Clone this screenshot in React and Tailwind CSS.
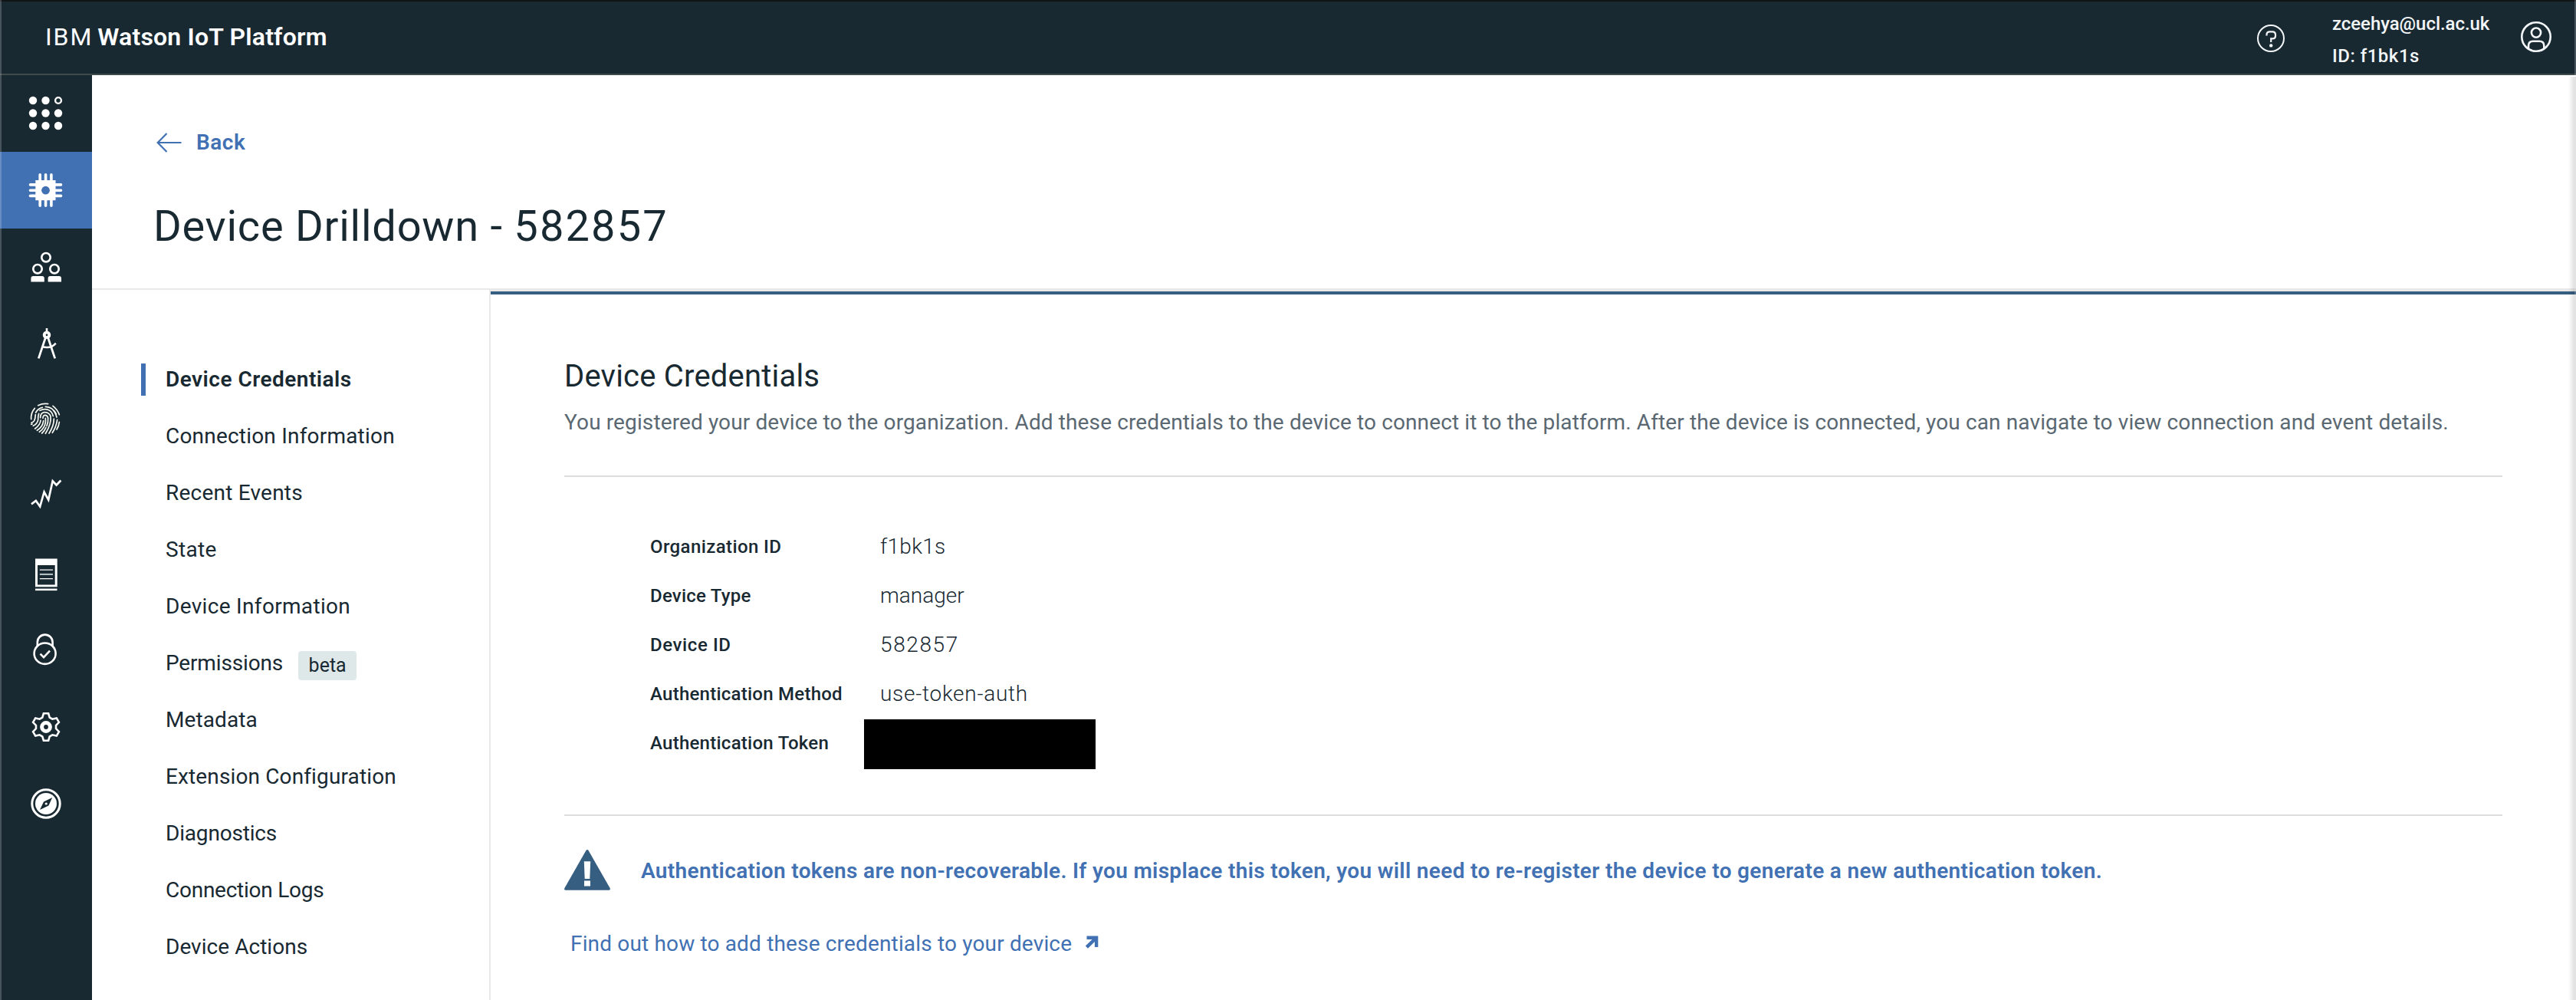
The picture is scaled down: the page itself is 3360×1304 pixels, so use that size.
const W = "#ffffff";
const INK = "#182932";

function gearPath(cx, cy) {
  const pts = [];
  for (let i = 0; i < 6; i++) {
    const base = -90 + i * 60;
    [[-21, 13.2], [-10, 18], [10, 18], [21, 13.2]].forEach(([d, r]) => {
      const a = ((base + d) * Math.PI) / 180;
      pts.push(`${(cx + r * Math.cos(a)).toFixed(2)} ${(cy + r * Math.sin(a)).toFixed(2)}`);
    });
  }
  return "M" + pts.join("L") + "Z";
}

const railIcons = [
  <g fill={W}>
    {[131, 147.5, 164].map((y) =>
      [43, 59.5, 76].map((x) =>
        y === 131 && x === 76 ? (
          <circle key={x + "-" + y} cx={x} cy={y} r="3.9" fill="none" stroke={W} strokeWidth="2.4" />
        ) : (
          <circle key={x + "-" + y} cx={x} cy={y} r="5.2" />
        )
      )
    )}
  </g>,
  <g>
    <path
      d="M52.2 227.7V268.3M59.6 227.7V268.3M66.9 227.7V268.3M39.5 240.9H79.5M39.5 248.2H79.5M39.5 255.4H79.5"
      stroke={W}
      strokeWidth="3.6"
      strokeLinecap="round"
    />
    <rect x="46.3" y="235" width="26.2" height="26.2" fill={W} />
    <circle cx="59.5" cy="248.2" r="5.4" fill="#4171b3" />
  </g>,
  <g>
    <g fill="none" stroke={W} strokeWidth="2.7">
      <circle cx="60" cy="335.7" r="5.7" />
      <circle cx="49" cy="350.7" r="5.7" />
      <circle cx="71" cy="350.7" r="5.7" />
    </g>
    <path d="M40.4 367.5V363Q40.4 360 43.4 360H54.8Q57.8 360 57.8 363V367.5ZM62.6 367.5V363Q62.6 360 65.6 360H77Q80 360 80 363V367.5Z" fill={W} />
  </g>,
  <g fill="none" stroke={W}>
    <path d="M61 428V433" strokeWidth="2.6" />
    <circle cx="61" cy="436.8" r="3.3" strokeWidth="3.9" />
    <path d="M59.3 440.5L50.3 467.4M62.7 440.5L71.7 467.4" strokeWidth="2.8" />
    <path d="M55 452Q66 455.5 72.8 447.6" strokeWidth="2.4" />
  </g>,
  <g transform="translate(30 510) scale(0.3333)" fill="none" stroke="#f4f6ef" strokeWidth="5.2" strokeLinecap="round">
    <path d="M59 56Q78 47 98 50M117 58Q135 72 142 92M142 121Q140 138 132 150M46 67Q30 85 32 110" />
    <path d="M50 84Q58 68 76 64M88 61Q103 62 112 68Q126 80 132 102M134 112Q130 140 115 163M49 92Q48 108 44 116Q41 121 33 124" />
    <path d="M66 76Q82 68 98 73Q114 80 118 98M121 108Q121 136 102 165M62 88Q58 100 59 112Q56 128 40 136M121 76Q126 82 130 90" />
    <path d="M68 104Q68 86 82 83Q102 82 108 98Q112 128 88 166M69 114Q68 132 47 147M74 165Q84 156 90 142" />
    <path d="M78 106Q78 94 87 94Q97 96 98 106Q99 122 93 136M80 116Q78 140 55 154M88 106Q90 126 82 140Q76 152 64 160M32 130L36 129" />
  </g>,
  <path d="M41 657.3L46.8 653L52.2 660.5L57.6 641.5L63.2 651.8L68.7 627.3L73.6 632.5L79.4 626.5" fill="none" stroke={W} strokeWidth="2.7" />,
  <g>
    <path d="M46 728.6H74.7V765.2H46ZM49 737V762.4H71.7V737Z" fill={W} fillRule="evenodd" />
    <path d="M51.8 743.2H69M51.8 754.6H69" stroke={W} strokeWidth="1.3" />
    <path d="M51.8 748.9H69" stroke="#bcc6c8" strokeWidth="2" />
    <rect x="46" y="767.6" width="28.5" height="2.5" fill={W} />
  </g>,
  <g fill="none" stroke={W} strokeWidth="2.6">
    <ellipse cx="58.6" cy="852.2" rx="14" ry="13.7" />
    <path d="M48.8 843V837.5A9.9 9.9 0 0 1 68.6 837.5V843" />
    <path d="M52.5 852.6L57 857.2L65 848.6" />
  </g>,
  <g fill="none" stroke={W}>
    <path d={gearPath(60, 948)} strokeWidth="2.6" />
    <circle cx="60" cy="948" r="5.4" strokeWidth="5" />
  </g>,
  <g>
    <circle cx="60" cy="1048" r="18.2" fill="none" stroke={W} strokeWidth="3" />
    <circle cx="60" cy="1048" r="14" fill={W} />
    <path d="M68.2 1040L63.4 1050.6L52 1056L57 1045.4Z" fill={INK} />
    <circle cx="60.2" cy="1048" r="1.6" fill={W} />
  </g>,
];

const navItems = [
  ["Device Credentials", "font-semibold tracking-[0.48px]"],
  ["Connection Information", "tracking-[0.2px]"],
  ["Recent Events", "tracking-[0.22px]"],
  ["State", "tracking-[0.3px]"],
  ["Device Information", "tracking-[0.32px]"],
  ["Permissions", "tracking-[-0.15px]"],
  ["Metadata", "tracking-[0.1px]"],
  ["Extension Configuration", "tracking-[0.13px]"],
  ["Diagnostics", "tracking-[-0.18px]"],
  ["Connection Logs", "tracking-[-0.25px]"],
  ["Device Actions", "tracking-[0.04px]"],
];

const credentials = [
  ["Organization ID", "tracking-[0.4px]", "f1bk1s", "tracking-[0.28px]"],
  ["Device Type", "tracking-[0.23px]", "manager", "tracking-[0px]"],
  ["Device ID", "tracking-[0.6px]", "582857", "tracking-[1.6px]"],
  ["Authentication Method", "tracking-[0.25px]", "use-token-auth", "tracking-[0.73px]"],
  ["Authentication Token", "tracking-[0.26px]", null, ""],
];

function Header() {
  return (
    <header className="flex h-[98px] items-start border-t-2 border-b-2 border-t-[#101414] border-b-[#3f4a4b] bg-[#182932] pl-[59px] text-white">
      <div className="mt-[26px] flex items-baseline text-[32px] leading-10">
        <span className="tracking-[1.9px]">IBM</span>
        <span className="ml-[6px] font-semibold tracking-[0.2px]">Watson IoT Platform</span>
      </div>
      <svg className="mt-[28px] ml-auto h-10 w-10" viewBox="2942 30 40 40" fill="none" stroke="#f3f6f8">
        <circle cx="2962" cy="50" r="17" strokeWidth="2" />
        <path d="M2956.5 46.5V45.5Q2956.5 41.3 2960.5 41.3H2964Q2968 41.3 2968 45.3V46.8Q2968 50.4 2964.5 50.4H2962.2V55" strokeWidth="2.2" />
        <circle cx="2962.2" cy="59.4" r="2.2" fill="#f3f6f8" stroke="none" />
      </svg>
      <div className="mt-[8px] ml-[60px] w-[246px] text-[24px] leading-[42px] font-medium text-[#f3f6f8]">
        <div className="tracking-[-0.05px]">zceehya@ucl.ac.uk</div>
        <div className="tracking-[0.5px]">ID: f1bk1s</div>
      </div>
      <svg className="mt-[26px] mr-[32px] h-10 w-10" viewBox="3288 28 40 40" fill="none" stroke="#f3f6f8" strokeWidth="2.6">
        <circle cx="3308" cy="48" r="18.7" />
        <circle cx="3308" cy="42.6" r="6.1" />
        <path d="M3298 63.5V59.5Q3298 53.7 3304 53.7H3312.3Q3318.3 53.7 3318.3 59.5V63.5" />
      </svg>
    </header>
  );
}

function Rail() {
  return (
    <aside className="w-[120px] shrink-0 bg-[#182932]">
      {railIcons.map((icon, i) => (
        <div key={i} className={"flex h-[100px] items-center justify-center " + (i === 1 ? "bg-[#4171b3]" : "")}>
          <svg className="h-[60px] w-[60px]" viewBox={`30 ${118 + i * 100} 60 60`}>
            {icon}
          </svg>
        </div>
      ))}
    </aside>
  );
}

function SideNav() {
  return (
    <nav className="w-[520px] shrink-0 border-r-2 border-[#e9e9e9] pt-[80px] pl-[64px]">
      {navItems.map(([label, style], i) => (
        <div key={label} className="flex h-[74px] items-center">
          <span className={"h-[42px] w-[6px] " + (i === 0 ? "bg-[#4171b3]" : "")} />
          <span className={"ml-[26px] text-[28px] leading-10 whitespace-nowrap " + style}>{label}</span>
          {label === "Permissions" && (
            <span className="mt-[5px] ml-[20px] flex h-[38px] w-[76px] items-center justify-center rounded bg-[#dfe8e9] text-[25px]">
              beta
            </span>
          )}
        </div>
      ))}
    </nav>
  );
}

function Credentials() {
  return (
    <section className="grow border-t-2 border-[#e9e9e9]">
      <div className="border-t-4 border-[#365e80] px-24 pt-[83px]">
        <h2 className="text-[40px] leading-[48px] tracking-[0.2px]">Device Credentials</h2>
        <p className="mt-4 text-[28px] leading-10 tracking-[0.12px] whitespace-nowrap text-[#5a6872]">
          You registered your device to the organization. Add these credentials to the device to connect it to the
          platform. After the device is connected, you can navigate to view connection and event details.
        </p>
        <dl className="mt-[49px] border-y-2 border-[#dcdddd] pt-[59px] pb-[61px] pl-[112px]">
          {credentials.map(([label, labelStyle, value, valueStyle]) => (
            <div key={label} className="flex h-16 items-center">
              <dt className={"w-[279px] text-[24px] leading-10 font-medium whitespace-nowrap " + labelStyle}>{label}</dt>
              {value ? (
                <dd className={"ml-[21px] text-[28px] leading-10 font-light " + valueStyle}>{value}</dd>
              ) : (
                <dd className="mt-[3px] h-[65px] w-[302px] shrink-0 bg-black" />
              )}
            </div>
          ))}
        </dl>
        <div className="mt-[44px] flex h-[54px] items-center">
          <svg className="h-[54px] w-[60px]" viewBox="736 1108 60 54">
            <path d="M764.6 1108.8Q766 1107.2 767.4 1108.8L795.7 1158.2Q796.4 1160.6 794 1160.8H738Q735.6 1160.6 736.3 1158.2Z" fill="#365e80" />
            <path d="M761.8 1123.3H770.2L769.3 1146H762.7ZM762 1148.4H770V1155.4H762Z" fill={W} />
          </svg>
          <p className="mt-[2px] ml-10 text-[28px] leading-10 font-semibold tracking-[0.33px] whitespace-nowrap text-[#4171b3]">
            Authentication tokens are non-recoverable. If you misplace this token, you will need to re-register the
            device to generate a new authentication token.
          </p>
        </div>
        <a className="mt-[48px] flex h-10 items-center pl-[8px] text-[28px] leading-10 text-[#4171b3]">
          <span className="mt-[2px] tracking-[0.16px] whitespace-nowrap">
            Find out how to add these credentials to your device
          </span>
          <svg className="-mt-[3px] ml-[17px] h-[18px] w-[18px]" viewBox="0 0 18 18">
            <path d="M2.5 0.6H17.3V15H12.9V8L4 16.8L0.8 13.6L9.6 5H2.5Z" fill="#4171b3" />
          </svg>
        </a>
      </div>
    </section>
  );
}

export default function App() {
  return (
    <div className="relative flex h-[1304px] w-[3360px] flex-col overflow-hidden bg-white font-['Roboto',sans-serif] text-[#182932]">
      <Header />
      <div className="flex grow">
        <Rail />
        <main className="flex grow flex-col">
          <div className="h-[280px] border-b-2 border-[#e9e9e9] pt-[68px] pl-[84px]">
            <a className="flex h-10 items-center text-[28px] leading-10 font-semibold text-[#4171b3]">
              <svg className="h-[26px] w-[33px]" viewBox="0 0 33 26" fill="none" stroke="#4171b3" strokeWidth="2.2">
                <path d="M13.5 1L1.7 13L13.5 25M1.7 13H32.5" />
              </svg>
              <span className="ml-[19px] tracking-[0.5px]">Back</span>
            </a>
            <h1 className="mt-[59px] -ml-[4px] text-[56px] leading-[60px] tracking-[0.75px]">
              Device Drilldown - <span className="tracking-[2.1px]">582857</span>
            </h1>
          </div>
          <div className="flex grow">
            <SideNav />
            <Credentials />
          </div>
        </main>
      </div>
      <div className="absolute top-0 left-0 h-full w-[2px] bg-white/20" />
      <div className="absolute top-[100px] right-0 bottom-0 w-[10px] bg-linear-to-r from-transparent to-black/15" />
      <div className="absolute top-0 right-0 h-full w-[2px] bg-white/20" />
    </div>
  );
}
